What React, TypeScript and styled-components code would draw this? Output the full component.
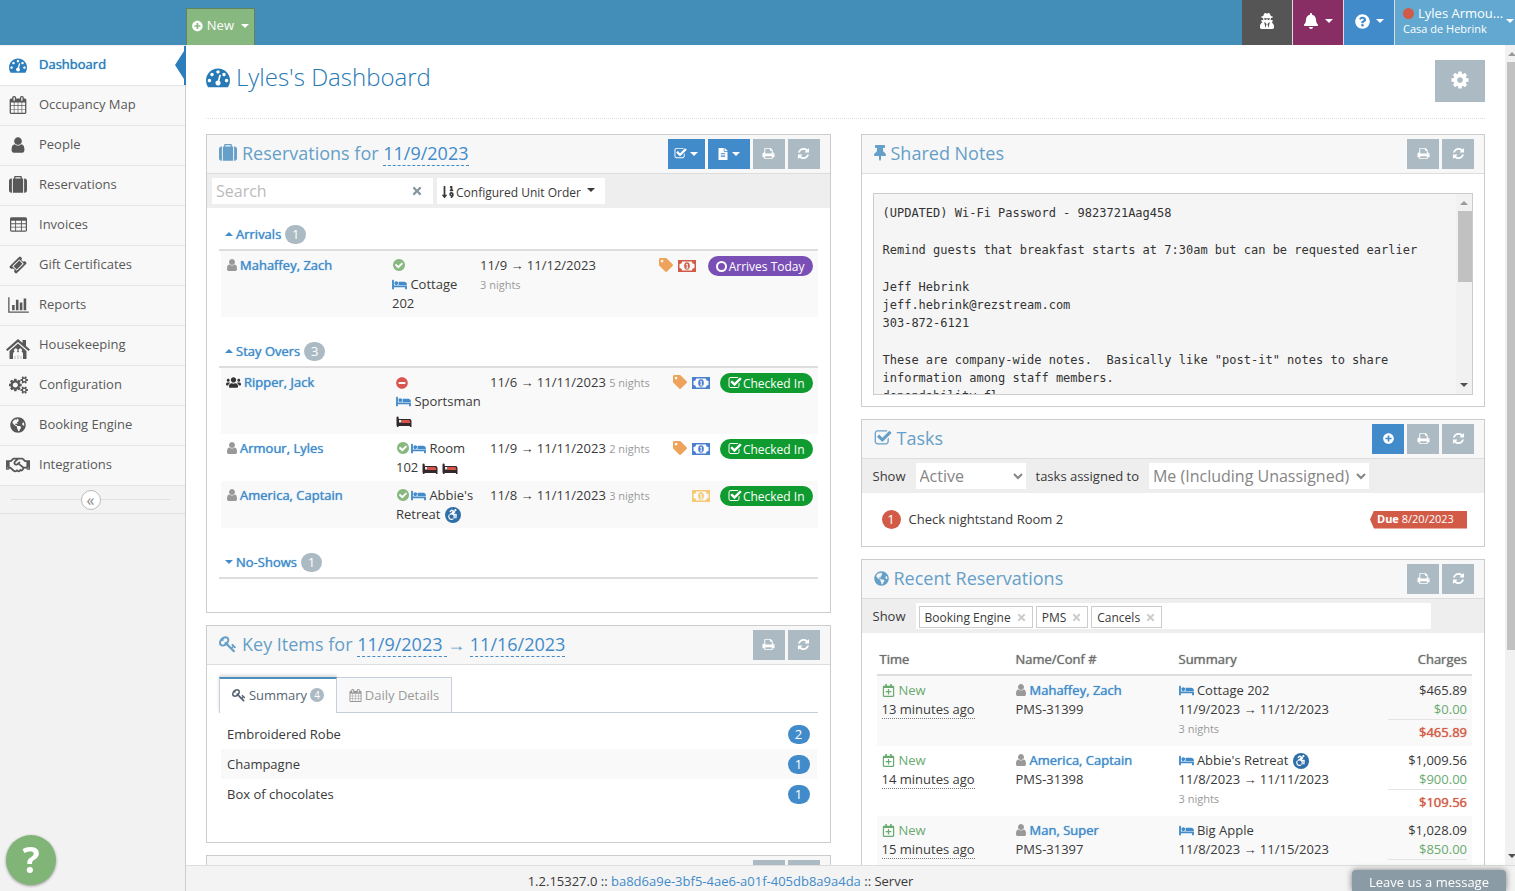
import React from "react";
import styled, { createGlobalStyle, css } from "styled-components";
import {
  FaAccessibleIcon,
  FaBell,
  FaFileAlt,
  FaGlobeAmericas,
  FaMinusCircle,
  FaPlusCircle,
  FaQuestionCircle,
  FaRegCalendarPlus,
  FaRegHandshake,
  FaSortNumericDown,
  FaTag,
  FaThumbtack,
  FaTimes,
  FaUsers,
  FaUserSecret,
} from "react-icons/fa";

const Global = createGlobalStyle`
  *, *::before, *::after { box-sizing: border-box; }
  body {
    margin: 0;
    background: #fff;
    color: #393939;
    font: 13px/19px "Open Sans", "Noto Sans", sans-serif;
  }
  a { color: #428bca; text-decoration: none; }
  button, input, select { font: inherit; border: 0; border-radius: 0; margin: 0; }
  button { cursor: pointer; padding: 0; }
`;

/* ---------- icons ---------- */

const paths = {
  gauge: [1792, "M384 1152q0-53-37.5-90.5t-90.5-37.5-90.5 37.5-37.5 90.5 37.5 90.5 90.5 37.5 90.5-37.5 37.5-90.5zm192-448q0-53-37.5-90.5t-90.5-37.5-90.5 37.5-37.5 90.5 37.5 90.5 90.5 37.5 90.5-37.5 37.5-90.5zm428 481l101-382q6-26-7.5-48.5t-38.5-29.5-48 6.5-30 39.5l-101 382q-60 5-107 43.5t-63 98.5q-20 77 20 146t117 89 146-20 89-117q16-60-6-117t-72-91zm660-33q0-53-37.5-90.5t-90.5-37.5-90.5 37.5-37.5 90.5 37.5 90.5 90.5 37.5 90.5-37.5 37.5-90.5zm-640-640q0-53-37.5-90.5t-90.5-37.5-90.5 37.5-37.5 90.5 37.5 90.5 90.5 37.5 90.5-37.5 37.5-90.5zm448 192q0-53-37.5-90.5t-90.5-37.5-90.5 37.5-37.5 90.5 37.5 90.5 90.5 37.5 90.5-37.5 37.5-90.5zm320 448q0 261-141 483-19 29-54 29h-1402q-35 0-54-29-141-221-141-483 0-182 71-348t191-286 286-191 348-71 348 71 286 191 191 286 71 348z"],
  calendar: [1792, "M192 1664h288v-288h-288v288zm352 0h320v-288h-320v288zm-352-352h288v-320h-288v320zm352 0h320v-320h-320v320zm-352-384h288v-288h-288v288zm736 736h320v-288h-320v288zm-384-736h320v-288h-320v288zm768 736h288v-288h-288v288zm-384-352h320v-320h-320v320zm-352-864v-288q0-13-9.5-22.5t-22.5-9.5h-64q-13 0-22.5 9.5t-9.5 22.5v288q0 13 9.5 22.5t22.5 9.5h64q13 0 22.5-9.5t9.5-22.5zm736 864h288v-320h-288v320zm-384-384h320v-288h-320v288zm384 0h288v-288h-288v288zm32-480v-288q0-13-9.5-22.5t-22.5-9.5h-64q-13 0-22.5 9.5t-9.5 22.5v288q0 13 9.5 22.5t22.5 9.5h64q13 0 22.5-9.5t9.5-22.5zm384-64v1280q0 52-38 90t-90 38h-1408q-52 0-90-38t-38-90v-1280q0-52 38-90t90-38h128v-96q0-66 47-113t113-47h64q66 0 113 47t47 113v96h384v-96q0-66 47-113t113-47h64q66 0 113 47t47 113v96h128q52 0 90 38t38 90z"],
  user: [1792, "M1536 1399q0 109-62.5 187t-150.5 78h-854q-88 0-150.5-78t-62.5-187q0-85 8.5-160.5t31.5-152 58.5-131 94-89 134.5-34.5q131 128 313 128t313-128q76 0 134.5 34.5t94 89 58.5 131 31.5 152 8.5 160.5zm-256-887q0 159-112.5 271.5t-271.5 112.5-271.5-112.5-112.5-271.5 112.5-271.5 271.5-112.5 271.5 112.5 112.5 271.5z"],
  suitcase: [1792, "M640 256h512v-128h-512v128zm-352 0v1408h-64q-92 0-158-66t-66-158v-960q0-92 66-158t158-66h64zm1120 0v1408h-1024v-1408h128v-160q0-40 28-68t68-28h576q40 0 68 28t28 68v160h128zm384 224v960q0 92-66 158t-158 66h-64v-1408h64q92 0 158 66t66 158z"],
  ticket: [1792, "M1024 452l316 316-572 572-316-316zm-211 979l618-618q19-19 19-45t-19-45l-362-362q-18-18-45-18t-45 18l-618 618q-19 19-19 45t19 45l362 362q18 18 45 18t45-18zm889-637l-907 908q-37 37-90.5 37t-90.5-37l-126-126q56-56 56-136t-56-136-136-56-136 56l-125-126q-37-37-37-90.5t37-90.5l907-906q37-37 90.5-37t90.5 37l125 125q-56 56-56 136t56 136 136 56 136-56l126 125q37 37 37 90.5t-37 90.5z"],
  table: [1792, "M1792 288v1216q0 66-47 113t-113 47h-1472q-66 0-113-47t-47-113v-1216q0-66 47-113t113-47h1472q66 0 113 47t47 113zM128 512v256h416v-256zM640 512v256h512v-256zM1248 512v256h416v-256zM128 864v256h416v-256zM640 864v256h512v-256zM1248 864v256h416v-256zM128 1216v320h416v-320zM640 1216v320h512v-320zM1248 1216v320h416v-320z"],
  chart: [2048, "M640 896v512h-256v-512h256zm384-512v1024h-256v-1024h256zm1024 1152v128h-2048v-1536h128v1408h1920zm-640-896v768h-256v-768h256zm384-384v1152h-256v-1152h256z"],
  cogs: [1920, "M896 896q0-106-75-181t-181-75-181 75-75 181 75 181 181 75 181-75 75-181zm768 512q0-52-38-90t-90-38-90 38-38 90q0 53 37.5 90.5t90.5 37.5 90.5-37.5 37.5-90.5zm0-1024q0-52-38-90t-90-38-90 38-38 90q0 53 37.5 90.5t90.5 37.5 90.5-37.5 37.5-90.5zm-384 421v185q0 10-7 19.5t-16 10.5l-155 24q-11 35-32 76 34 48 90 115 7 11 7 20 0 12-7 19-23 30-82.5 89.5t-78.5 59.5q-11 0-21-7l-115-90q-37 19-77 31-11 108-23 155-7 24-30 24h-186q-11 0-20-7.5t-10-17.5l-23-153q-34-10-75-31l-118 89q-7 7-20 7-11 0-21-8-144-133-144-160 0-9 7-19 10-14 41-53t47-61q-23-44-35-82l-152-24q-10-1-17-9.5t-7-19.5v-185q0-10 7-19.5t16-10.5l155-24q11-35 32-76-34-48-90-115-7-11-7-20 0-12 7-20 22-30 82-89t79-59q11 0 21 7l115 90q34-18 77-32 11-108 23-154 7-24 30-24h186q11 0 20 7.5t10 17.5l23 153q34 10 75 31l118-89q8-7 20-7 11 0 21 8 144 133 144 160 0 8-7 19-12 16-42 54t-45 60q23 48 34 82l152 23q10 2 17 10.5t7 19.5zm640 533v140q0 16-149 31-12 27-30 52 51 113 51 138 0 4-4 7-122 71-124 71-8 0-46-47t-52-68q-20 2-30 2t-30-2q-14 21-52 68t-46 47q-2 0-124-71-4-3-4-7 0-25 51-138-18-25-30-52-149-15-149-31v-140q0-16 149-31 13-29 30-52-51-113-51-138 0-4 4-7 4-2 35-20t59-34 30-16q8 0 46 46.5t52 67.5q20-2 30-2t30 2q51-71 92-112l6-2q4 0 124 70 4 3 4 7 0 25-51 138 17 23 30 52 149 15 149 31zm0-1024v140q0 16-149 31-12 27-30 52 51 113 51 138 0 4-4 7-122 71-124 71-8 0-46-47t-52-68q-20 2-30 2t-30-2q-14 21-52 68t-46 47q-2 0-124-71-4-3-4-7 0-25 51-138-18-25-30-52-149-15-149-31v-140q0-16 149-31 13-29 30-52-51-113-51-138 0-4 4-7 4-2 35-20t59-34 30-16q8 0 46 46.5t52 67.5q20-2 30-2t30 2q51-71 92-112l6-2q4 0 124 70 4 3 4 7 0 25-51 138 17 23 30 52 149 15 149 31z"],
  cog: [1792, "M1152 896q0-106-75-181t-181-75-181 75-75 181 75 181 181 75 181-75 75-181zm512-109v222q0 12-8 23t-20 13l-185 28q-19 54-39 91 35 50 107 138 10 12 10 25t-9 23q-27 37-99 108t-94 71q-12 0-26-9l-138-108q-44 23-91 38-16 136-29 186-7 28-36 28h-222q-14 0-24.5-8.5t-11.5-21.5l-28-184q-49-16-90-37l-141 107q-10 9-25 9-14 0-25-11-126-114-165-168-7-10-7-23 0-12 8-23 15-21 51-66.5t54-70.5q-27-50-41-99l-183-27q-13-2-21-12.5t-8-23.5v-222q0-12 8-23t19-13l186-28q14-46 39-92-40-57-107-138-10-12-10-24 0-10 9-23 26-36 98.5-107.5t94.5-71.5q13 0 26 10l138 107q44-23 91-38 16-136 29-186 7-28 36-28h222q14 0 24.5 8.5t11.5 21.5l28 184q49 16 90 37l142-107q9-9 24-9 13 0 25 10 129 119 165 170 7 8 7 22 0 12-8 23-15 21-51 66.5t-54 70.5q26 50 41 98l183 28q13 2 21 12.5t8 23.5z"],
  refresh: [1792, "M1639 1056q0 5-1 7-64 268-268 434.5t-478 166.5q-146 0-282.5-55t-243.5-157l-129 129q-19 19-45 19t-45-19-19-45v-448q0-26 19-45t45-19h448q26 0 45 19t19 45-19 45l-137 137q71 66 161 102t187 36q134 0 250-65t186-179q11-17 53-117 8-23 30-23h192q13 0 22.5 9.5t9.5 22.5zm25-800v448q0 26-19 45t-45 19h-448q-26 0-45-19t-19-45 19-45l138-138q-148-137-349-137-134 0-250 65t-186 179q-11 17-53 117-8 23-30 23h-199q-13 0-22.5-9.5t-9.5-22.5v-7q65-268 270-434.5t480-166.5q146 0 284 55.5t245 156.5l130-129q19-19 45-19t45 19 19 45z"],
  print: [1792, "M448 1536h896v-256h-896v256zm0-640h896v-384h-160q-40 0-68-28t-28-68v-160h-640v640zm1152 64q0-26-19-45t-45-19-45 19-19 45 19 45 45 19 45-19 19-45zm128 0v416q0 13-9.5 22.5t-22.5 9.5h-224v160q0 40-28 68t-68 28h-960q-40 0-68-28t-28-68v-160h-224q-13 0-22.5-9.5t-9.5-22.5v-416q0-79 56.5-135.5t135.5-56.5h64v-544q0-40 28-68t68-28h672q40 0 88 20t76 48l152 152q28 28 48 76t20 88v256h64q79 0 135.5 56.5t56.5 135.5z"],
  check: [1792, "M1472 930v318q0 119-84.5 203.5t-203.5 84.5h-832q-119 0-203.5-84.5t-84.5-203.5v-832q0-119 84.5-203.5t203.5-84.5h832q63 0 117 25 15 7 18 23 3 17-9 29l-49 49q-10 10-23 10-3 0-9-2-23-6-45-6h-832q-66 0-113 47t-47 113v832q0 66 47 113t113 47h832q66 0 113-47t47-113v-254q0-13 9-22l64-64q10-10 23-10 6 0 12 3 20 8 20 29zm231-489l-814 814q-24 24-57 24t-57-24l-430-430q-24-24-24-57t24-57l110-110q24-24 57-24t57 24l263 263 647-647q24-24 57-24t57 24l110 110q24 24 24 57t-24 57z"],
  bed: [2048, "M256 1024h1728q26 0 45 19t19 45v448h-256v-256h-1536v256h-256v-1216q0-26 19-45t45-19h128q26 0 45 19t19 45v704zm576-320q0-106-75-181t-181-75-181 75-75 181 75 181 181 75 181-75 75-181zm1216 256v-64q0-159-112.5-271.5t-271.5-112.5h-704q-26 0-45 19t-19 45v384h1152z"],
  checkCircle: [1792, "M1412 734q0-28-18-46l-91-90q-19-19-45-19t-45 19l-408 407-226-226q-19-19-45-19t-45 19l-91 90q-18 18-18 46 0 27 18 45l362 362q19 19 45 19 27 0 46-19l543-543q18-18 18-45zm252 162q0 209-103 385.5t-279.5 279.5-385.5 103-385.5-103-279.5-279.5-103-385.5 103-385.5 279.5-279.5 385.5-103 385.5 103 279.5 279.5 103 385.5z"],
  key: [1792, "M832 512q0-80-56-136t-136-56-136 56-56 136q0 42 19 83-41-19-83-19-80 0-136 56t-56 136 56 136 136 56 136-56 56-136q0-42-19-83 41 19 83 19 80 0 136-56t56-136zm851 704q0 17-49 66t-66 49q-9 0-28.5-16t-36.5-33-38.5-40-24.5-26l-96 96 220 220q28 28 28 68 0 42-39 81t-81 39q-40 0-68-28l-671-671q-176 131-365 131-163 0-265.5-102.5t-102.5-265.5q0-160 95-313t248-248 313-95q163 0 265.5 102.5t102.5 265.5q0 189-131 365l355 355 96-96q-3-3-26-24.5t-40-38.5-33-36.5-16-28.5q0-17 49-66t66-49q13 0 23 10 6 6 46 44.5t82 79.5 86.5 86 73 78 28.5 41z"],
} as const;

type IconName = keyof typeof paths;

const Svg = styled.svg<{ $c?: string; $w?: number; $h?: number }>`
  flex: none;
  display: inline-block;
  vertical-align: -2px;
  fill: ${(p) => p.$c || "currentColor"};
  ${(p) => p.$w && css`width: ${p.$w}px; height: ${p.$h}px;`}
`;

function Icon({ name, size = 14, color }: { name: IconName; size?: number; color?: string }) {
  const [w, d] = paths[name];
  return (
    <Svg $c={color} width={Math.round((size * w) / 1792)} height={size} viewBox={`0 0 ${w} 1792`} aria-hidden>
      <path fillRule="evenodd" d={d} />
    </Svg>
  );
}

function Money({ color }: { color: string }) {
  return (
    <Svg width="18" height="12" viewBox="0 0 18 12" aria-hidden>
      <path
        fill={color}
        fillRule="evenodd"
        d="M0 0h18v12H0zM4 1.5A2.5 2.5 0 0 1 1.500 4v4A2.500 2.500 0 0 1 4 10.500h10A2.500 2.500 0 0 1 16.500 8V4A2.500 2.500 0 0 1 14 1.500z"
      />
      <ellipse cx="9" cy="6" rx="2.800" ry="3.700" fill={color} />
      <path d="M8 4.500l1-.8h.7v4h.8v.8H7.800v-.8h.9V5H8z" fill="#fff" />
    </Svg>
  );
}

function RedBed() {
  return (
    <Svg width="16" height="11" viewBox="0 0 15 11" aria-hidden>
      <path d="M0 1.500Q0 .5 1 .5t1.200 1V3h11.300q1.500.5 1.500 2v6h-1.600v-1H2v1H.6L0 9z" fill="#33292b" />
      <path d="M5 4h7.500q1.200.3 1.200 2v1H5z" fill="#d9534a" />
      <rect x="2.500" y="4" width="2.300" height="2.500" fill="#eee" />
    </Svg>
  );
}

function House() {
  return (
    <HouseBox>
      <Svg width="24" height="20" viewBox="0 0 24 20" aria-hidden>
        <path d="M12 0L0 10.500l1.500 1.500L12 3l10.500 9L24 10.500l-4-3.500V1h-3.500v3z" />
        <path
          fillRule="evenodd"
          d="M12 4.500L3.500 12v8H7v-5q0-2 1.500-2.500a1.800 1.800 0 1 1 2.500 0l1 1 1-1a1.800 1.800 0 1 1 2.500 0Q17 13 17 15v5h3.500v-8z"
        />
        <path d="M9 20v-3M15 20v-3M12 20v-4" stroke="#bbb" strokeWidth="1" />
      </Svg>
    </HouseBox>
  );
}

const HouseBox = styled.span`
  display: flex;
  padding-top: 8px;
`;

const Caret = styled.i<{ $up?: boolean }>`
  display: inline-block;
  flex: none;
  vertical-align: 2px;
  border: 4px solid transparent;
  ${(p) =>
    p.$up
      ? css`border-top: 0; border-bottom-color: currentColor;`
      : css`border-bottom: 0; border-top-color: currentColor;`}
`;

const Access = styled.span`
  display: inline-flex;
  align-items: center;
  justify-content: center;
  width: 16px;
  height: 16px;
  border-radius: 8px;
  margin-left: 1px;
  vertical-align: -1px;
  background: #2f6fa8;
  color: #fff;
  font-size: 11px;
`;

/* ---------- shell ---------- */

const Shell = styled.div`
  display: flex;
  flex-direction: column;
  height: 100vh;
  overflow: hidden;
`;

const TopBar = styled.header`
  display: flex;
  align-items: flex-end;
  flex: none;
  height: 45px;
  padding-left: 186px;
  background: #438eb9;
  overflow: hidden;
`;

const NewButton = styled.button`
  display: flex;
  align-items: center;
  gap: 4px;
  width: 69px;
  height: 37px;
  padding: 0 5px 3px;
  margin-right: auto;
  background: #87b87f;
  border: 1px solid #62815f;
  border-bottom: 0;
  color: #fff;
  & > i { margin-left: 3px; }
`;

const TopItem = styled.button<{ $bg: string }>`
  display: flex;
  align-items: center;
  justify-content: center;
  gap: 6px;
  width: 51px;
  height: 45px;
  padding-bottom: 3px;
  background: ${(p) => p.$bg};
  border-right: 1px solid #ddd;
  color: #fff;
  font-size: 15px;
`;

const UserItem = styled.button`
  display: flex;
  align-items: center;
  gap: 3px;
  width: 120px;
  height: 45px;
  padding: 0 0 3px 8px;
  background: #62a8d1;
  color: #fff;
  text-align: left;
  line-height: 15px;
`;

const UserText = styled.span`
  flex: none;
  width: 100px;
  white-space: nowrap;
  small { display: block; font-size: 11px; }
`;

const Dot = styled.i`
  display: inline-block;
  width: 11px;
  height: 11px;
  border-radius: 6px;
  margin-right: 4px;
  background: #d15b47;
  vertical-align: -1px;
`;

const Below = styled.div`
  display: flex;
  flex: 1;
  min-height: 0;
`;

const Sidebar = styled.nav`
  flex: none;
  width: 186px;
  padding-top: 1px;
  background: #f2f2f2;
  border-right: 1px solid #ccc;
`;

const strong = css`
  font-weight: 400;
  text-shadow: 0 0 1px currentColor;
`;

const NavItem = styled.a<{ $active?: boolean }>`
  position: relative;
  display: grid;
  grid-template-columns: 37px 1fr;
  align-items: center;
  height: 40px;
  padding: 0 0 2px 2px;
  border-bottom: 1px solid #e5e5e5;
  background: #f8f8f8;
  color: #585858;
  & > svg, & > span { justify-self: center; margin-right: 5px; }
  ${(p) =>
    p.$active &&
    css`
      background: #fff;
      color: #2b7dbc;
      ${strong}
      &::after {
        content: "";
        position: absolute;
        right: -1px;
        top: 0;
        width: 11px;
        height: 39px;
        background: #2b7dbc;
        clip-path: polygon(9px 0, 11px 0, 11px 100%, 9px 100%, 9px 33px, 0 19px, 9px 5px);
      }
    `}
`;

const Collapse = styled.div`
  display: flex;
  align-items: center;
  height: 28px;
  padding: 0 15px 0 11px;
  background: #f3f3f3;
  border-bottom: 1px solid #e0e0e0;
  &::before, &::after { content: ""; flex: 1; height: 1px; background: #e0e0e0; }
`;

const CollapseButton = styled.button`
  width: 20px;
  height: 20px;
  border: 1px solid #bbb;
  border-radius: 10px;
  background: #fff;
  color: #888;
  font-size: 16px;
  line-height: 14px;
`;

const Main = styled.div`
  display: flex;
  flex-direction: column;
  flex: 1;
  min-width: 0;
`;

const Viewport = styled.div`
  display: flex;
  flex: 1;
  min-height: 0;
`;

const Page = styled.main`
  flex: 1;
  min-width: 0;
  padding: 15px 20px 0;
  overflow: hidden;
`;

const PageHead = styled.div`
  display: flex;
  justify-content: space-between;
  height: 59px;
  border-bottom: 1px dotted #ddd;
  margin-bottom: 15px;
`;

const Title = styled.h1`
  display: flex;
  align-items: center;
  gap: 6px;
  height: 33px;
  margin: 0;
  color: #2679b5;
  font-size: 24px;
  font-weight: 300;
`;

const Gear = styled.button`
  width: 50px;
  height: 42px;
  background: #abbac3;
  color: #fff;
`;

const Columns = styled.div`
  display: grid;
  grid-template-columns: 1fr 1fr;
  gap: 30px;
  align-items: start;
`;

const Column = styled.div`
  display: grid;
  gap: 12px;
  min-width: 0;
`;

const Rail = styled.div<{ $inner?: boolean }>`
  display: flex;
  flex-direction: column;
  flex: none;
  align-items: center;
  width: ${(p) => (p.$inner ? 16 : 10)}px;
  padding: 7px 0;
  background: #f1f1f1;
  color: #999;
  overflow: hidden;
  & > i:last-child { color: #505050; margin-top: auto; }
  & > i { margin-left: ${(p) => (p.$inner ? 0 : 4)}px; }
`;

const Thumb = styled.div<{ $h: string }>`
  width: calc(100% - 2px);
  height: ${(p) => p.$h};
  margin-top: 6px;
  margin-left: 2px;
  background: #c1c1c1;
`;

const Footer = styled.footer`
  flex: none;
  height: 26px;
  padding: 7px 260px 0 0;
  border-top: 1px solid #ddd;
  background: #f3f3f3;
  text-align: center;
  line-height: 17px;
`;

const HelpBubble = styled.button`
  position: fixed;
  left: 6px;
  bottom: 6px;
  width: 50px;
  height: 50px;
  border-radius: 25px;
  background: #80b577;
  box-shadow: 0 1px 3px rgba(0, 0, 0, 0.4);
  color: #fff;
  font-size: 36px;
  font-weight: 700;
  line-height: 50px;
`;

const ChatTab = styled.button`
  position: fixed;
  right: 9px;
  bottom: 0;
  width: 154px;
  height: 21px;
  border-radius: 4px 4px 0 0;
  background: #8b9ba5;
  box-shadow: 0 0 6px rgba(0, 0, 0, 0.5);
  color: #fff;
  line-height: 24px;
`;

/* ---------- panels ---------- */

const Panel = styled.section<{ $pb?: number }>`
  border: 1px solid #ccc;
  background: #fff;
  padding-bottom: ${(p) => p.$pb || 0}px;
`;

const PanelHead = styled.div`
  display: flex;
  align-items: center;
  gap: 3px;
  height: 39px;
  padding: 0 10px 1px 12px;
  border-bottom: 1px solid #ddd;
  background: #f7f7f7;
`;

const PanelTitle = styled.h2`
  display: flex;
  align-items: center;
  gap: 5px;
  margin: 0 auto 0 0;
  padding-bottom: 1px;
  color: #669fc7;
  font-size: 18px;
  font-weight: 400;
  line-height: 24px;
  white-space: nowrap;
  a { border-bottom: 1px dashed #428bca; }
`;

const Tool = styled.button<{ $w?: number; $blue?: boolean }>`
  display: flex;
  align-items: center;
  justify-content: center;
  gap: 3px;
  width: ${(p) => p.$w || 32}px;
  height: 30px;
  background: ${(p) => (p.$blue ? "#428bca" : "#abbac3")};
  color: #fff;
`;

const Toolbar = styled.div<{ $pad?: string; $gap?: number }>`
  display: flex;
  align-items: center;
  gap: ${(p) => p.$gap || 10}px;
  height: 34px;
  padding: ${(p) => p.$pad || "0 11px"};
  background: #eee;
`;

const SearchBox = styled.label`
  display: flex;
  align-items: center;
  width: 221px;
  height: 26px;
  padding: 0 10px 0 4px;
  background: #fff;
  color: #8796a0;
  input {
    flex: 1;
    min-width: 0;
    padding: 0;
    outline: 0;
    background: none;
    font-size: 16px;
    &::placeholder { color: #bbb; }
  }
`;

const SortButton = styled.button`
  display: flex;
  align-items: center;
  gap: 1px;
  width: 168px;
  height: 26px;
  padding: 2px 0 0 4px;
  background: #fff;
  color: #393939;
  font-size: 12px;
  white-space: nowrap;
  & > i { margin: 0 0 4px 5px; }
`;

const GroupHead = styled.h3<{ $top?: number }>`
  display: flex;
  align-items: center;
  gap: 4px;
  height: 32px;
  margin: ${(p) => p.$top || 0}px 12px 0;
  padding-left: 6px;
  border-bottom: 2px solid #ddd;
  font-size: 13px;
  ${strong}
  button { display: flex; align-items: center; gap: 3px; background: none; color: #428bca; ${strong} }
`;

const Badge = styled.span<{ $bg: string; $w?: number; $round?: boolean }>`
  display: inline-flex;
  align-items: center;
  justify-content: center;
  flex: none;
  width: ${(p) => p.$w || 21}px;
  height: ${(p) => (p.$round ? 14 : 19)}px;
  border-radius: 10px;
  background: ${(p) => p.$bg};
  color: #fff;
  font-size: ${(p) => (p.$round ? 10 : 13)}px;
  text-shadow: none;
`;

const StayTable = styled.table<{ $cols: number[] }>`
  width: calc(100% - 26px);
  margin: 0 12px 0 14px;
  border-collapse: collapse;
  table-layout: fixed;
  tr:nth-child(odd) { background: #f9f9f9; }
  td { padding: 5px 5px 4px; vertical-align: top; white-space: nowrap; }
  td:nth-child(1) { width: ${(p) => p.$cols[0]}px; }
  td:nth-child(2) { width: ${(p) => p.$cols[1]}px; padding-right: 0; }
  td:nth-child(4) { width: ${(p) => p.$cols[2]}px; padding-left: 0; text-align: right; }
  td:nth-child(5) { width: ${(p) => p.$cols[3]}px; padding-left: 0; text-align: right; }
  td > svg + svg { margin-left: 5px; }
`;

const Strong = styled.a`
  ${strong}
  margin-left: 3px;
`;

const Line = styled.div`
  height: 19px;
  & > svg + svg { margin-left: 1px; }
`;

const Muted = styled.small`
  color: #999;
  font-size: 11px;
`;

const Pill = styled.span<{ $bg: string }>`
  display: inline-flex;
  align-items: center;
  gap: 1px;
  height: 20px;
  padding: 0 8px;
  border-radius: 10px;
  background: ${(p) => p.$bg};
  color: #fff;
  font-size: 12px;
`;

const Ring = styled.i`
  width: 11px;
  height: 11px;
  border: 2px solid #fff;
  border-radius: 6px;
  margin-right: 1px;
`;

const Tabs = styled.div`
  display: flex;
  align-items: flex-end;
  height: 48px;
  margin: 0 12px;
  border-bottom: 1px solid #c5d0dc;
`;

const Tab = styled.button<{ $active?: boolean }>`
  display: flex;
  align-items: center;
  justify-content: center;
  gap: 3px;
  width: ${(p) => (p.$active ? 118 : 115)}px;
  height: ${(p) => (p.$active ? 36 : 35)}px;
  margin-bottom: ${(p) => (p.$active ? -1 : 0)}px;
  border: 1px solid #c5d0dc;
  border-bottom: 0;
  background: #f9f9f9;
  color: #999;
  ${(p) =>
    p.$active
      ? css`
          border-top: 2px solid #4c8fbd;
          padding-bottom: 2px;
          background: #fff;
          color: #576373;
          box-shadow: 0 -2px 3px rgba(0, 0, 0, 0.15);
        `
      : css`border-left: 0;`}
`;

const ItemList = styled.ul`
  list-style: none;
  margin: 6px 13px 0 14px;
  padding: 0;
  li {
    display: flex;
    align-items: center;
    justify-content: space-between;
    height: 30px;
    padding: 0 7px 0 6px;
  }
  li:nth-child(even) { background: #f9f9f9; }
`;

const NotesBox = styled.div`
  display: flex;
  height: 202px;
  margin: 19px 11px 0;
  border: 1px solid #ccc;
  background: #f5f5f5;
`;

const NotesText = styled.div`
  flex: 1;
  min-width: 0;
  padding: 10px 9px 0;
  overflow: hidden;
  color: #333;
  font-family: "DejaVu Sans Mono", "Liberation Mono", monospace;
  font-size: 12px;
  line-height: 18px;
  white-space: pre-wrap;
  p { margin: 0 0 19px; }
`;

const Select = styled.select<{ $w: number }>`
  width: ${(p) => p.$w}px;
  height: 26px;
  padding: 0;
  background: #fff;
  color: #858585;
  font-size: 16px;
`;

const TaskRow = styled.div`
  display: flex;
  align-items: center;
  gap: 8px;
  height: 53px;
  padding: 0 17px 0 20px;
`;

const Due = styled.span`
  width: 97px;
  height: 18px;
  padding-left: 7px;
  margin-left: auto;
  background: #d15b47;
  clip-path: polygon(4px 0, 100% 0, 100% 100%, 4px 100%, 0 50%);
  color: #fff;
  font-size: 11px;
  line-height: 16px;
  b { font-weight: 700; }
`;

const TagBox = styled.div`
  display: flex;
  align-items: center;
  gap: 3px;
  flex: 1;
  height: 26px;
  padding: 2px 3px 0;
  background: #fff;
`;

const Tag = styled.span`
  display: flex;
  align-items: center;
  gap: 5px;
  height: 22px;
  padding: 0 5px;
  border: 1px solid #ccc;
  font-size: 12px;
  button { display: flex; background: none; color: #ccc; font-size: 11px; }
`;

const RecentTable = styled.table`
  width: calc(100% - 27px);
  margin: 9px 12px 0 15px;
  border-collapse: collapse;
  table-layout: fixed;
  th { height: 33px; padding: 2px 5px 0 3px; border-bottom: 2px solid #ddd; color: #707070; text-align: left; ${strong} }
  th:nth-child(1) { width: 136px; }
  th:nth-child(2) { width: 163px; }
  th:nth-child(4) { width: 15%; text-align: right; }
  td { padding: 5px 5px 4px 3px; vertical-align: top; white-space: nowrap; }
  td:nth-child(1) { padding-left: 5px; }
  tbody tr:nth-child(odd) { background: #f9f9f9; }
`;

const Added = styled.div`
  display: flex;
  align-items: center;
  gap: 4px;
  height: 19px;
  color: #69aa6f;
`;

const Ago = styled.span`
  display: inline-block;
  height: 18px;
  border-bottom: 1px dotted #777;
  line-height: 17px;
`;

const Charge = styled.div<{ $c?: string; $total?: boolean }>`
  width: 79px;
  margin-left: auto;
  color: ${(p) => p.$c || "#393939"};
  text-align: right;
  ${(p) => p.$total && css`border-top: 1px solid #e5e5e5; padding-top: 3px; ${strong}`}
`;

/* ---------- content ---------- */

const nav: [string, React.ReactNode][] = [
  ["Dashboard", <Icon name="gauge" size={18} />],
  ["Occupancy Map", <Icon name="calendar" size={18} />],
  ["People", <Icon name="user" size={18} />],
  ["Reservations", <Icon name="suitcase" size={18} />],
  ["Invoices", <Icon name="table" size={17} />],
  ["Gift Certificates", <Icon name="ticket" size={18} />],
  ["Reports", <Icon name="chart" size={18} />],
  ["Housekeeping", <House />],
  ["Configuration", <Icon name="cogs" size={18} />],
  ["Booking Engine", <FaGlobeAmericas size={16} />],
  ["Integrations", <FaRegHandshake size={24} />],
];

function PrintRefresh() {
  return (
    <>
      <Tool aria-label="Print"><Icon name="print" size={13} /></Tool>
      <Tool aria-label="Refresh"><Icon name="refresh" size={13} /></Tool>
    </>
  );
}

function Guest({ name, group }: { name: string; group?: boolean }) {
  return (
    <>
      {group ? <Svg as={FaUsers} $c="#333" $w={15} $h={13} /> : <Person />}
      <Strong href="#guest">{name}</Strong>
    </>
  );
}

const PersonBox = styled.span`
  display: inline-flex;
  justify-content: center;
  width: 11px;
  vertical-align: -2px;
`;

function Person() {
  return <PersonBox><Icon name="user" color="#999" /></PersonBox>;
}

const ok = <Icon name="checkCircle" color="#87b87f" />;
const bed = <Icon name="bed" color="#428bca" size={13} />;
const wheelchair = <Access><FaAccessibleIcon /></Access>;

const checkedIn = <Pill $bg="#0f9b30"><Icon name="check" />Checked In</Pill>;
const tag = <Svg as={FaTag} $c="#eda35c" $w={14} $h={14} />;

const recent = [
  { ago: "13 minutes ago", name: "Mahaffey, Zach", conf: "PMS-31399", unit: "Cottage 202", dates: "11/9/2023 → 11/12/2023", nights: "3 nights", a: "$465.89", b: "$0.00", c: "$465.89" },
  { ago: "14 minutes ago", name: "America, Captain", conf: "PMS-31398", unit: "Abbie's Retreat", access: true, dates: "11/8/2023 → 11/11/2023", nights: "3 nights", a: "$1,009.56", b: "$900.00", c: "$109.56" },
  { ago: "15 minutes ago", name: "Man, Super", conf: "PMS-31397", unit: "Big Apple", dates: "11/8/2023 → 11/15/2023", nights: "", a: "$1,028.09", b: "$850.00", c: "" },
];

export default function App() {
  return (
    <Shell>
      <Global />
      <TopBar>
        <NewButton><FaPlusCircle size={12} />New<Caret /></NewButton>
        <TopItem $bg="#555" aria-label="Privacy"><FaUserSecret size={16} /></TopItem>
        <TopItem $bg="#892e65" aria-label="Alerts"><FaBell size={16} /><Caret /></TopItem>
        <TopItem $bg="#428bca" aria-label="Help"><FaQuestionCircle size={15} /><Caret /></TopItem>
        <UserItem>
          <UserText><Dot />Lyles Armou...<small>Casa de Hebrink</small></UserText>
          <Caret />
        </UserItem>
      </TopBar>
      <Below>
        <Sidebar>
          {nav.map(([label, icon], i) => (
            <NavItem key={label} href={"#" + label} $active={i === 0}>{icon}{label}</NavItem>
          ))}
          <Collapse><CollapseButton aria-label="Collapse menu">«</CollapseButton></Collapse>
        </Sidebar>
        <Main>
          <Viewport>
            <Page>
              <PageHead>
                <Title><Icon name="gauge" size={24} />Lyles's Dashboard</Title>
                <Gear aria-label="Settings"><Icon name="cog" size={20} /></Gear>
              </PageHead>
              <Columns>
                <Column>
                  <Panel $pb={33}>
                    <PanelHead>
                      <PanelTitle>
                        <Icon name="suitcase" size={18} />
                        <span>Reservations for <a href="#date">11/9/2023</a></span>
                      </PanelTitle>
                      <Tool $w={37} $blue aria-label="Select"><Icon name="check" size={13} /><Caret /></Tool>
                      <Tool $w={42} $blue aria-label="Reports"><FaFileAlt size={12} /><Caret /></Tool>
                      <PrintRefresh />
                    </PanelHead>
                    <Toolbar $pad="0 5px" $gap={4}>
                      <SearchBox>
                        <input placeholder="Search" aria-label="Search" />
                        <FaTimes size={12} />
                      </SearchBox>
                      <SortButton><FaSortNumericDown size={14} />Configured Unit Order<Caret /></SortButton>
                    </Toolbar>
                    <GroupHead $top={11}>
                      <button><Caret $up />Arrivals</button>
                      <Badge $bg="#abbac3">1</Badge>
                    </GroupHead>
                    <StayTable $cols={[166, 88, 80, 117]}>
                      <tbody>
                        <tr>
                          <td><Guest name="Mahaffey, Zach" /></td>
                          <td><Line>{ok}</Line><Line>{bed} Cottage</Line><Line>202</Line></td>
                          <td>11/9 → 11/12/2023<br /><Muted>3 nights</Muted></td>
                          <td>{tag}<Money color="#d15b47" /></td>
                          <td><Pill $bg="#7a4fb5"><Ring />Arrives Today</Pill></td>
                        </tr>
                      </tbody>
                    </StayTable>
                    <GroupHead $top={19}>
                      <button><Caret $up />Stay Overs</button>
                      <Badge $bg="#abbac3">3</Badge>
                    </GroupHead>
                    <StayTable $cols={[170, 94, 48, 103]}>
                      <tbody>
                        <tr>
                          <td><Guest name="Ripper, Jack" group /></td>
                          <td><Line><Svg as={FaMinusCircle} $c="#d9534f" $w={12} $h={12} /></Line><Line>{bed} Sportsman</Line><Line><RedBed /></Line></td>
                          <td>11/6 → 11/11/2023 <Muted>5 nights</Muted></td>
                          <td>{tag}<Money color="#4a7fd0" /></td>
                          <td>{checkedIn}</td>
                        </tr>
                        <tr>
                          <td><Guest name="Armour, Lyles" /></td>
                          <td><Line>{ok}{bed} Room</Line><Line>102 <RedBed /> <RedBed /></Line></td>
                          <td>11/9 → 11/11/2023 <Muted>2 nights</Muted></td>
                          <td>{tag}<Money color="#4a7fd0" /></td>
                          <td>{checkedIn}</td>
                        </tr>
                        <tr>
                          <td><Guest name="America, Captain" /></td>
                          <td><Line>{ok}{bed} Abbie's</Line><Line>Retreat {wheelchair}</Line></td>
                          <td>11/8 → 11/11/2023 <Muted>3 nights</Muted></td>
                          <td><Money color="#f5c871" /></td>
                          <td>{checkedIn}</td>
                        </tr>
                      </tbody>
                    </StayTable>
                    <GroupHead $top={19}>
                      <button><Caret />No-Shows</button>
                      <Badge $bg="#abbac3">1</Badge>
                    </GroupHead>
                  </Panel>

                  <Panel $pb={33}>
                    <PanelHead>
                      <PanelTitle>
                        <Icon name="key" size={18} />
                        <span>Key Items for <a href="#from">11/9/2023 </a>→ <a href="#to">11/16/2023</a></span>
                      </PanelTitle>
                      <PrintRefresh />
                    </PanelHead>
                    <Tabs>
                      <Tab $active><Icon name="key" />Summary <Badge $bg="#abbac3" $w={14} $round>4</Badge></Tab>
                      <Tab><Icon name="calendar" size={13} />Daily Details</Tab>
                    </Tabs>
                    <ItemList>
                      <li>Embroidered Robe<Badge $bg="#428bca" $w={22}>2</Badge></li>
                      <li>Champagne<Badge $bg="#428bca" $w={22}>1</Badge></li>
                      <li>Box of chocolates<Badge $bg="#428bca" $w={22}>1</Badge></li>
                    </ItemList>
                  </Panel>

                  <Panel $pb={200}>
                    <PanelHead><PanelTitle /><PrintRefresh /></PanelHead>
                  </Panel>
                </Column>

                <Column>
                  <Panel $pb={11}>
                    <PanelHead>
                      <PanelTitle><Svg as={FaThumbtack} $w={12} $h={16} />Shared Notes</PanelTitle>
                      <PrintRefresh />
                    </PanelHead>
                    <NotesBox>
                      <NotesText>
                        <p>(UPDATED) Wi-Fi Password - 9823721Aag458</p>
                        <p>Remind guests that breakfast starts at 7:30am but can be requested earlier</p>
                        <p>{"Jeff Hebrink\njeff.hebrink@rezstream.com\n303-872-6121"}</p>
                        <p>{'These are company-wide notes.  Basically like "post-it" notes to share\ninformation among staff members.\ndependability fl'}</p>
                      </NotesText>
                      <Rail $inner><Caret $up /><Thumb $h="71px" /><Caret /></Rail>
                    </NotesBox>
                  </Panel>

                  <Panel>
                    <PanelHead>
                      <PanelTitle><Icon name="check" size={18} />Tasks</PanelTitle>
                      <Tool $blue aria-label="Add task"><FaPlusCircle size={11} /></Tool>
                      <PrintRefresh />
                    </PanelHead>
                    <Toolbar>
                      <label htmlFor="state">Show</label>
                      <Select id="state" $w={110}><option>Active</option></Select>
                      <label htmlFor="who">tasks assigned to</label>
                      <Select id="who" $w={220}><option>Me (Including Unassigned)</option></Select>
                    </Toolbar>
                    <TaskRow>
                      <Badge $bg="#d15b47" $w={19}>1</Badge>
                      Check nightstand Room 2
                      <Due><b>Due</b> 8/20/2023</Due>
                    </TaskRow>
                  </Panel>

                  <Panel>
                    <PanelHead>
                      <PanelTitle><FaGlobeAmericas size={15} />Recent Reservations</PanelTitle>
                      <PrintRefresh />
                    </PanelHead>
                    <Toolbar $pad="0 53px 0 11px">
                      <span>Show</span>
                      <TagBox>
                        {["Booking Engine", "PMS", "Cancels"].map((t) => (
                          <Tag key={t}>{t}<button aria-label={"Remove " + t}><FaTimes /></button></Tag>
                        ))}
                      </TagBox>
                    </Toolbar>
                    <RecentTable>
                      <thead>
                        <tr><th>Time</th><th>Name/Conf #</th><th>Summary</th><th>Charges</th></tr>
                      </thead>
                      <tbody>
                        {recent.map((r) => (
                          <tr key={r.conf}>
                            <td><Added><FaRegCalendarPlus size={13} />New</Added><Ago>{r.ago}</Ago></td>
                            <td><Guest name={r.name} /><br />{r.conf}</td>
                            <td><Line>{bed} {r.unit} {r.access && wheelchair}</Line><Line>{r.dates}</Line><Muted>{r.nights}</Muted></td>
                            <td><Charge>{r.a}</Charge><Charge $c="#69aa6f">{r.b}</Charge><Charge $c="#d15b47" $total>{r.c}</Charge></td>
                          </tr>
                        ))}
                      </tbody>
                    </RecentTable>
                  </Panel>
                </Column>
              </Columns>
            </Page>
            <Rail><Caret $up /><Thumb $h="73%" /><Caret /></Rail>
          </Viewport>
          <Footer>
            1.2.15327.0 :: <a href="#build">ba8d6a9e-3bf5-4ae6-a01f-405db8a9a4da</a> :: Server
          </Footer>
        </Main>
      </Below>
      <HelpBubble aria-label="Help">?</HelpBubble>
      <ChatTab>Leave us a message</ChatTab>
    </Shell>
  );
}
